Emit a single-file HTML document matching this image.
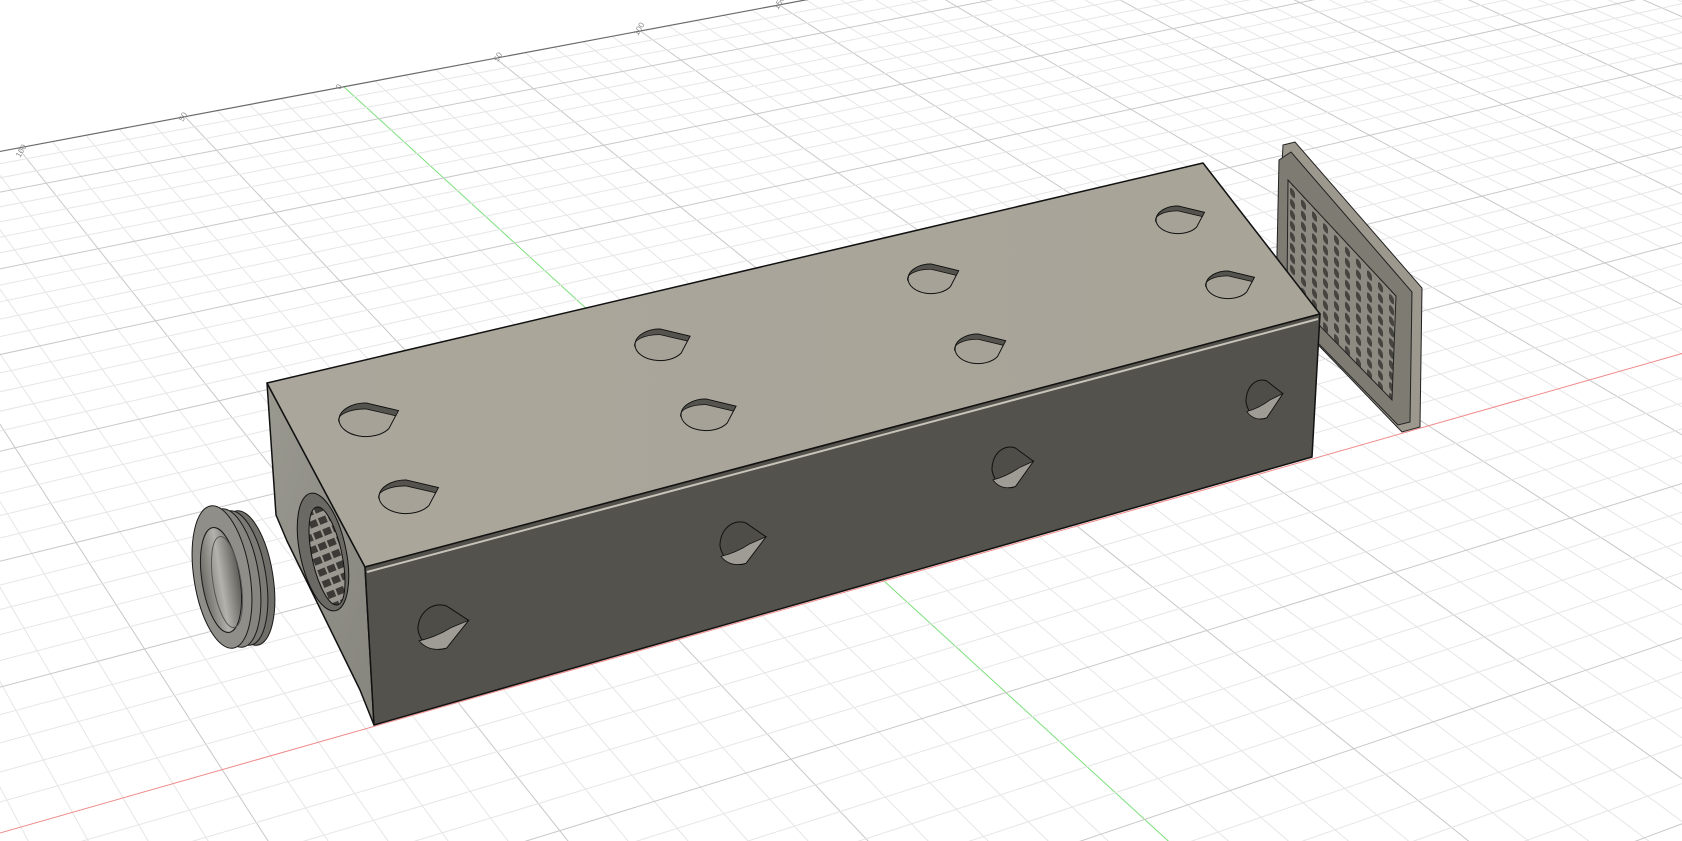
<!DOCTYPE html>
<html><head><meta charset="utf-8"><style>
html,body{margin:0;padding:0;background:#fff;width:1682px;height:841px;overflow:hidden}
svg{display:block;position:absolute;left:0;top:0}
</style></head><body>
<svg id="s" width="1682" height="841" viewBox="0 0 1682 841" xmlns="http://www.w3.org/2000/svg">
<defs>
<linearGradient id="top" x1="0" y1="0" x2="1" y2="0"><stop offset="0" stop-color="#aaa69b"/><stop offset="1" stop-color="#a8a498"/></linearGradient>
<linearGradient id="left" x1="0" y1="0" x2="1" y2="1"><stop offset="0" stop-color="#9a9990"/><stop offset="1" stop-color="#86857e"/></linearGradient>
<linearGradient id="ring" x1="0" y1="0" x2="1" y2="0"><stop offset="0" stop-color="#6c6b66"/><stop offset=".5" stop-color="#b4b2ac"/><stop offset="1" stop-color="#5e5d58"/></linearGradient>
<pattern id="mesh" width="11" height="11" patternUnits="userSpaceOnUse" patternTransform="skewY(47)">
<rect width="11" height="11" fill="#8d8a81"/><rect x="3" y="2" width="5" height="8" rx="2.5" fill="#45443f"/>
</pattern>
<pattern id="slots" width="10" height="12" patternUnits="userSpaceOnUse" patternTransform="rotate(-10)">
<rect width="10" height="12" fill="#9a9890"/><rect x="1" y="2" width="8" height="7" fill="#3b3a36"/>
</pattern>
</defs>
<g id="grid"></g>
<g stroke="#222" stroke-width="1">
<polygon points="1283,145 1295,142 1422,288 1420,427 1402,432 1275,300" fill="#9c988d"/>
<polygon points="1279,160 1291,152 1412,292 1410,422 1398,425 1276,300" fill="#7e7b73"/>
<polygon points="1288,180 1396,296 1392,400 1287,292" fill="url(#mesh)"/>
</g>
<g stroke="#1a1a1a" stroke-width="1">
<ellipse cx="247" cy="578" rx="26" ry="68" transform="rotate(-9 247 578)" fill="#6f6e69"/>
<ellipse cx="240" cy="578" rx="26" ry="68" transform="rotate(-9 240 578)" fill="#7b7a74" />
<ellipse cx="232" cy="578" rx="27" ry="70" transform="rotate(-9 232 578)" fill="#868580"/>
<ellipse cx="222" cy="577" rx="28" ry="72" transform="rotate(-9 222 577)" fill="#8f8e88"/>
<ellipse cx="221" cy="580" rx="19" ry="53" transform="rotate(-9 221 580)" fill="url(#ring)"/>
<ellipse cx="227" cy="582" rx="14" ry="46" transform="rotate(-9 227 582)" fill="none" stroke="#555"/>
</g>
<g stroke="#111" stroke-width="1.5" stroke-linejoin="round">
<polygon points="267,383 365,567 374,725 360,690 287,541 276,515" fill="url(#left)"/>
<polygon points="267,383 1203,163 1320,314 365,567" fill="url(#top)"/>
<polygon points="365,567 1320,314 1312,457 374,725" fill="#53524c"/>
</g>
<line x1="367" y1="572" x2="1318" y2="319" stroke="#c7c4ba" stroke-width="2"/>
<line x1="366" y1="569" x2="1319" y2="316" stroke="#55534c" stroke-width="1"/>
<g stroke="#111" stroke-width="1">
<ellipse cx="323" cy="552" rx="23" ry="60" transform="rotate(-12 323 552)" fill="#6a6963"/>
<ellipse cx="327" cy="556" rx="15" ry="50" transform="rotate(-12 327 556)" fill="url(#slots)"/>
</g>
<g id="holes"></g>
<g font-family="Liberation Sans, sans-serif" font-size="8" fill="#888">
<text x="20" y="158" transform="rotate(-60 20 158)">100</text>
<text x="183" y="122" transform="rotate(-60 183 122)">50</text>
<text x="340" y="90" transform="rotate(-60 340 90)">0</text>
<text x="498" y="62" transform="rotate(-60 498 62)">50</text>
<text x="638" y="36" transform="rotate(-60 638 36)">100</text>
<text x="778" y="10" transform="rotate(-60 778 10)">150</text>
</g>
</svg>
<script>
var a=0.000648,b=0.001204,V1=[7031,-1171],V2=[-1020,-1161],O=[884,581];
function P(u,v){var w=1+a*u+b*v;return[(a*u*V1[0]+b*v*V2[0]+O[0])/w,(a*u*V1[1]+b*v*V2[1]+O[1])/w];}
var g=document.getElementById('grid'),h='';
var VMAX=329,VMIN=-400,UMIN=-260,UMAX=600;
function ln(p,q,c,w){h+='<line x1="'+p[0].toFixed(1)+'" y1="'+p[1].toFixed(1)+'" x2="'+q[0].toFixed(1)+'" y2="'+q[1].toFixed(1)+'" stroke="'+c+'" stroke-width="'+w+'"/>';}
for(var u=-260;u<=600;u+=10){var m=(u%50==0);ln(P(u,VMIN),P(u,VMAX),u==0?'#7de07d':(m?'#c8c8c8':'#e6e6e6'),1);}
for(var v=-400;v<=VMAX;v+=10){var m=(v%50==0);ln(P(UMIN,v),P(UMAX,v),v==0?'#f08a8a':(m?'#c8c8c8':'#e6e6e6'),1);}
ln(P(UMIN,VMAX),P(UMAX,VMAX),'#6a6a6a',1.2);
g.innerHTML=h;
var H='';
function topHole(cx,cy,rx,ry){
 H+='<path d="M'+(cx-rx)+','+cy+' A'+rx+','+ry+' 0 0 0 '+(cx+rx*0.85)+','+(cy+ry*0.5)+' L'+(cx+rx*1.2)+','+(cy-ry*0.55)+' L'+(cx)+','+(cy-ry)+' A'+rx+','+ry+' 0 0 0 '+(cx-rx)+','+cy+' Z" fill="#a6a297" stroke="#111" stroke-width="1"/>';
 H+='<path d="M'+(cx-rx)+','+cy+' A'+rx+','+ry+' 0 0 1 '+cx+','+(cy-ry)+' L'+(cx+rx*1.2)+','+(cy-ry*0.55)+' L'+(cx+rx*1.1)+','+(cy-ry*0.25)+' L'+cx+','+(cy-ry*0.65)+' A'+rx+','+(ry*0.65)+' 0 0 0 '+(cx-rx)+','+(cy+2)+' Z" fill="#55534d" stroke="#111" stroke-width="0.8"/>';
}
function frontHole(cx,cy,rx,ry){
 H+='<path d="M'+(cx-rx)+','+cy+' A'+rx+','+ry+' 0 0 1 '+(cx+rx*0.3)+','+(cy-ry)+' L'+(cx+rx*1.3)+','+(cy-ry*0.4)+' L'+(cx+rx*0.3)+','+(cy+ry*0.75)+' A'+rx+','+ry+' 0 0 1 '+(cx-rx)+','+cy+' Z" fill="#4e4d48" stroke="#111" stroke-width="1"/>';
 H+='<path d="M'+(cx-rx*0.95)+','+(cy+ry*0.45)+' Q'+(cx-rx*0.2)+','+(cy+ry*0.3)+' '+(cx+rx*0.5)+','+(cy-ry*0.1)+' L'+(cx+rx*1.3)+','+(cy-ry*0.4)+' L'+(cx+rx*0.3)+','+(cy+ry*0.75)+' Q'+(cx-rx*0.5)+','+(cy+ry*0.95)+' '+(cx-rx*0.95)+','+(cy+ry*0.45)+' Z" fill="#9e9c95" stroke="#111" stroke-width="0.8"/>';
}
topHole(366,420,27,17);topHole(406,497,27,17);topHole(660,345,25,16);topHole(706,415,25,16);
topHole(931,279,23,15);topHole(978,349,23,15);topHole(1178,220,22,14);topHole(1228,285,22,14);
frontHole(440,630,22,24);frontHole(740,546,20,23);frontHole(1010,470,18,22);frontHole(1262,402,16,21);
document.getElementById('holes').innerHTML=H;
</script>
</body></html>
